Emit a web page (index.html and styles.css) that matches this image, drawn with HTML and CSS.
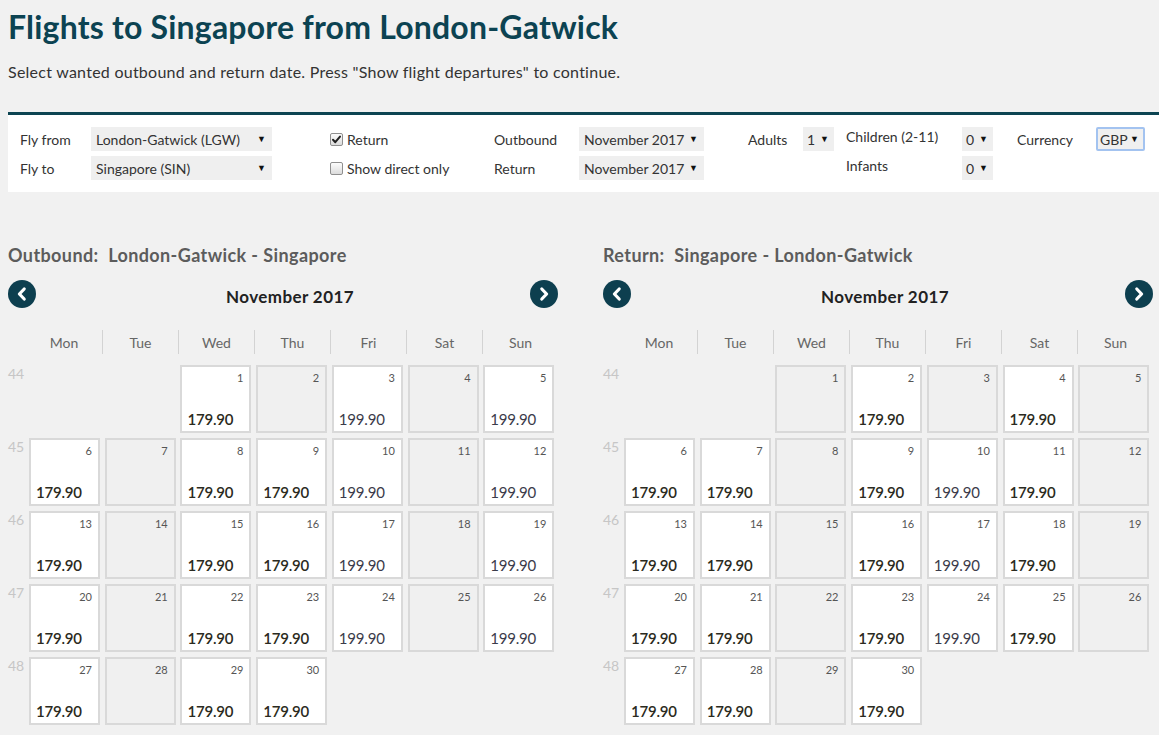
FILE: index.html
```html
<!DOCTYPE html>
<html lang="en">
<head>
<meta charset="utf-8">
<title>Flights to Singapore from London-Gatwick</title>
<link rel="stylesheet" href="styles.css">
</head>
<body>
<h1 class="title">Flights to Singapore from London-Gatwick</h1>
<p class="intro">Select wanted outbound and return date. Press "Show flight departures" to continue.</p>

<form class="search">
  <span class="lbl">Fly from</span>
  <div class="sel sel-wide"><span>London-Gatwick (LGW)</span><i>&#9660;</i></div>
  <label class="check"><span class="cb on"><svg viewBox="0 0 13 13" width="13" height="13"><path d="M3 6.8 L5.3 9.2 L10 3.6" fill="none" stroke="#222" stroke-width="2" stroke-linecap="round" stroke-linejoin="round"/></svg></span>Return</label>
  <span class="lbl">Outbound</span>
  <div class="sel sel-month"><span>November 2017</span><i>&#9660;</i></div>
  <span class="lbl">Adults</span>
  <div class="sel sel-num"><span>1</span><i>&#9660;</i></div>
  <span class="lbl lbl-up">Children (2-11)</span>
  <div class="sel sel-num"><span>0</span><i>&#9660;</i></div>
  <span class="lbl">Currency</span>
  <div class="sel sel-cur"><span>GBP</span><i>&#9660;</i></div>

  <span class="lbl">Fly to</span>
  <div class="sel sel-wide"><span>Singapore (SIN)</span><i>&#9660;</i></div>
  <label class="check"><span class="cb"></span>Show direct only</label>
  <span class="lbl">Return</span>
  <div class="sel sel-month"><span>November 2017</span><i>&#9660;</i></div>
  <span class="lbl"></span>
  <span></span>
  <span class="lbl lbl-up">Infants</span>
  <div class="sel sel-num"><span>0</span><i>&#9660;</i></div>
</form>

<div class="calendars">
  <section class="cal">
    <h2 class="cal-title">Outbound:&nbsp; London-Gatwick - Singapore</h2>
    <div class="cal-nav">
      <span class="nav-btn"><svg viewBox="0 0 28 28" width="28" height="28"><circle cx="14" cy="14" r="14" fill="#0d3f4f"/><path d="M16.2 9 L11.4 14 L16.2 19" fill="none" stroke="#fff" stroke-width="3.2" stroke-linecap="round" stroke-linejoin="round"/></svg></span>
      <span class="month">November 2017</span>
      <span class="nav-btn"><svg viewBox="0 0 28 28" width="28" height="28"><circle cx="14" cy="14" r="14" fill="#0d3f4f"/><path d="M11.8 9 L16.6 14 L11.8 19" fill="none" stroke="#fff" stroke-width="3.2" stroke-linecap="round" stroke-linejoin="round"/></svg></span>
    </div>
    <div class="dow">
      <span></span><span>Mon</span><span>Tue</span><span>Wed</span><span>Thu</span><span>Fri</span><span>Sat</span><span>Sun</span>
    </div>
    <div class="days">
      <span class="wk">44</span><span></span><span></span>
      <div class="day ok"><span class="n">1</span><span class="p lo">179.90</span></div>
      <div class="day"><span class="n">2</span></div>
      <div class="day ok"><span class="n">3</span><span class="p">199.90</span></div>
      <div class="day"><span class="n">4</span></div>
      <div class="day ok"><span class="n">5</span><span class="p">199.90</span></div>

      <span class="wk">45</span>
      <div class="day ok"><span class="n">6</span><span class="p lo">179.90</span></div>
      <div class="day"><span class="n">7</span></div>
      <div class="day ok"><span class="n">8</span><span class="p lo">179.90</span></div>
      <div class="day ok"><span class="n">9</span><span class="p lo">179.90</span></div>
      <div class="day ok"><span class="n">10</span><span class="p">199.90</span></div>
      <div class="day"><span class="n">11</span></div>
      <div class="day ok"><span class="n">12</span><span class="p">199.90</span></div>

      <span class="wk">46</span>
      <div class="day ok"><span class="n">13</span><span class="p lo">179.90</span></div>
      <div class="day"><span class="n">14</span></div>
      <div class="day ok"><span class="n">15</span><span class="p lo">179.90</span></div>
      <div class="day ok"><span class="n">16</span><span class="p lo">179.90</span></div>
      <div class="day ok"><span class="n">17</span><span class="p">199.90</span></div>
      <div class="day"><span class="n">18</span></div>
      <div class="day ok"><span class="n">19</span><span class="p">199.90</span></div>

      <span class="wk">47</span>
      <div class="day ok"><span class="n">20</span><span class="p lo">179.90</span></div>
      <div class="day"><span class="n">21</span></div>
      <div class="day ok"><span class="n">22</span><span class="p lo">179.90</span></div>
      <div class="day ok"><span class="n">23</span><span class="p lo">179.90</span></div>
      <div class="day ok"><span class="n">24</span><span class="p">199.90</span></div>
      <div class="day"><span class="n">25</span></div>
      <div class="day ok"><span class="n">26</span><span class="p">199.90</span></div>

      <span class="wk">48</span>
      <div class="day ok"><span class="n">27</span><span class="p lo">179.90</span></div>
      <div class="day"><span class="n">28</span></div>
      <div class="day ok"><span class="n">29</span><span class="p lo">179.90</span></div>
      <div class="day ok"><span class="n">30</span><span class="p lo">179.90</span></div>
    </div>
  </section>

  <section class="cal">
    <h2 class="cal-title">Return:&nbsp; Singapore - London-Gatwick</h2>
    <div class="cal-nav">
      <span class="nav-btn"><svg viewBox="0 0 28 28" width="28" height="28"><circle cx="14" cy="14" r="14" fill="#0d3f4f"/><path d="M16.2 9 L11.4 14 L16.2 19" fill="none" stroke="#fff" stroke-width="3.2" stroke-linecap="round" stroke-linejoin="round"/></svg></span>
      <span class="month">November 2017</span>
      <span class="nav-btn"><svg viewBox="0 0 28 28" width="28" height="28"><circle cx="14" cy="14" r="14" fill="#0d3f4f"/><path d="M11.8 9 L16.6 14 L11.8 19" fill="none" stroke="#fff" stroke-width="3.2" stroke-linecap="round" stroke-linejoin="round"/></svg></span>
    </div>
    <div class="dow">
      <span></span><span>Mon</span><span>Tue</span><span>Wed</span><span>Thu</span><span>Fri</span><span>Sat</span><span>Sun</span>
    </div>
    <div class="days">
      <span class="wk">44</span><span></span><span></span>
      <div class="day"><span class="n">1</span></div>
      <div class="day ok"><span class="n">2</span><span class="p lo">179.90</span></div>
      <div class="day"><span class="n">3</span></div>
      <div class="day ok"><span class="n">4</span><span class="p lo">179.90</span></div>
      <div class="day"><span class="n">5</span></div>

      <span class="wk">45</span>
      <div class="day ok"><span class="n">6</span><span class="p lo">179.90</span></div>
      <div class="day ok"><span class="n">7</span><span class="p lo">179.90</span></div>
      <div class="day"><span class="n">8</span></div>
      <div class="day ok"><span class="n">9</span><span class="p lo">179.90</span></div>
      <div class="day ok"><span class="n">10</span><span class="p">199.90</span></div>
      <div class="day ok"><span class="n">11</span><span class="p lo">179.90</span></div>
      <div class="day"><span class="n">12</span></div>

      <span class="wk">46</span>
      <div class="day ok"><span class="n">13</span><span class="p lo">179.90</span></div>
      <div class="day ok"><span class="n">14</span><span class="p lo">179.90</span></div>
      <div class="day"><span class="n">15</span></div>
      <div class="day ok"><span class="n">16</span><span class="p lo">179.90</span></div>
      <div class="day ok"><span class="n">17</span><span class="p">199.90</span></div>
      <div class="day ok"><span class="n">18</span><span class="p lo">179.90</span></div>
      <div class="day"><span class="n">19</span></div>

      <span class="wk">47</span>
      <div class="day ok"><span class="n">20</span><span class="p lo">179.90</span></div>
      <div class="day ok"><span class="n">21</span><span class="p lo">179.90</span></div>
      <div class="day"><span class="n">22</span></div>
      <div class="day ok"><span class="n">23</span><span class="p lo">179.90</span></div>
      <div class="day ok"><span class="n">24</span><span class="p">199.90</span></div>
      <div class="day ok"><span class="n">25</span><span class="p lo">179.90</span></div>
      <div class="day"><span class="n">26</span></div>

      <span class="wk">48</span>
      <div class="day ok"><span class="n">27</span><span class="p lo">179.90</span></div>
      <div class="day ok"><span class="n">28</span><span class="p lo">179.90</span></div>
      <div class="day"><span class="n">29</span></div>
      <div class="day ok"><span class="n">30</span><span class="p lo">179.90</span></div>
    </div>
  </section>
</div>
</body>
</html>
```

FILE: styles.css
```css
html, body {
  margin: 0;
  background: #f1f1f1;
}
body {
  padding: 0 0 0 8px;
  font-family: Lato, "Open Sans", Arial, sans-serif;
  color: #333;
  overflow: hidden;
}
.title {
  margin: 0;
  padding-top: 8px;
  font-size: 32px;
  line-height: 38px;
  letter-spacing: 0.2px;
  font-weight: 700;
  color: #0c4352;
}
.intro {
  margin: 16px 0 0;
  font-size: 16px;
  line-height: 20px;
  letter-spacing: 0.25px;
  color: #333;
}
.search {
  margin-top: 30px;
  border-top: 3px solid #0c4452;
  background: #fff;
  padding: 12px 0 12px 12px;
  display: grid;
  grid-template-columns: 71px 239px 164px 85px 169px 55px 43px 116px 55px 79px 49px;
  grid-template-rows: 24px 24px;
  row-gap: 5px;
  align-items: center;
  font-size: 14px;
  color: #333;
}
.lbl {
  white-space: nowrap;
}
.lbl-up {
  position: relative;
  top: -3px;
}
.sel {
  height: 24px;
  box-sizing: border-box;
  background: #efefef;
  display: flex;
  align-items: center;
  justify-content: space-between;
  padding: 0 6px 0 5px;
  white-space: nowrap;
  color: #333;
}
.sel i {
  font-style: normal;
  font-size: 9px;
  color: #111;
  margin-top: -2px;
}
.sel-wide { width: 181px; }
.sel-month { width: 125px; }
.sel-num { width: 31px; padding: 0 5px 0 4px; }
.sel-cur {
  width: 49px;
  background: #f0f0f0;
  border: 2px solid #a3c3f0;
  border-radius: 2px;
  padding: 0 4px 0 2px;
}
.check {
  display: flex;
  align-items: center;
  gap: 4px;
}
.cb {
  width: 13px;
  height: 13px;
  box-sizing: border-box;
  border: 1px solid #8f8f8f;
  border-radius: 2px;
  background: linear-gradient(#fcfcfc, #dcdcdc);
  display: inline-block;
  position: relative;
}
.cb svg {
  position: absolute;
  left: -1px;
  top: -1px;
}

.calendars {
  display: flex;
  gap: 45px;
  margin-top: 52px;
}
.cal {
  width: 550px;
}
.cal-title {
  margin: 0;
  font-size: 18px;
  line-height: 22px;
  letter-spacing: 0.4px;
  font-weight: 700;
  color: #5c5c5c;
}
.cal-nav {
  margin-top: 14px;
  height: 28px;
  display: flex;
  align-items: center;
}
.nav-btn {
  width: 28px;
  height: 28px;
  display: block;
}
.nav-btn svg { display: block; }
.month {
  flex: 1;
  text-align: center;
  padding-left: 14px;
  padding-top: 5px;
  font-size: 17px;
  letter-spacing: 0.4px;
  font-weight: 700;
  color: #222;
}
.dow {
  margin-top: 22px;
  display: grid;
  grid-template-columns: 18px repeat(7, 1fr);
  height: 24px;
  font-size: 14px;
  color: #666;
}
.dow span {
  display: flex;
  align-items: center;
  justify-content: center;
}
.dow span:nth-child(n+3) {
  border-left: 1px solid #d3d3d3;
}
.days {
  margin-top: 11px;
  display: grid;
  grid-template-columns: 20px repeat(7, 1fr);
  grid-auto-rows: 68px;
  row-gap: 5px;
}
.wk {
  font-size: 14px;
  line-height: 16px;
  color: #c6c6c6;
  padding-top: 1px;
}
.day {
  margin-left: 1px;
  width: 71px;
  height: 68px;
  box-sizing: border-box;
  border: 2px solid #d9d9d9;
  background: #f0f0f0;
  display: flex;
  flex-direction: column;
  padding: 5px 6px 3px 5px;
}
.day.ok {
  background: #fff;
}
.n {
  align-self: flex-end;
  font-size: 11px;
  line-height: 12px;
  color: #555;
}
.p {
  margin-top: auto;
  font-size: 15px;
  line-height: 18px;
  letter-spacing: -0.2px;
  color: #3b3b4a;
}
.p.lo {
  color: #2a2a20;
  font-weight: 600;
}
```
